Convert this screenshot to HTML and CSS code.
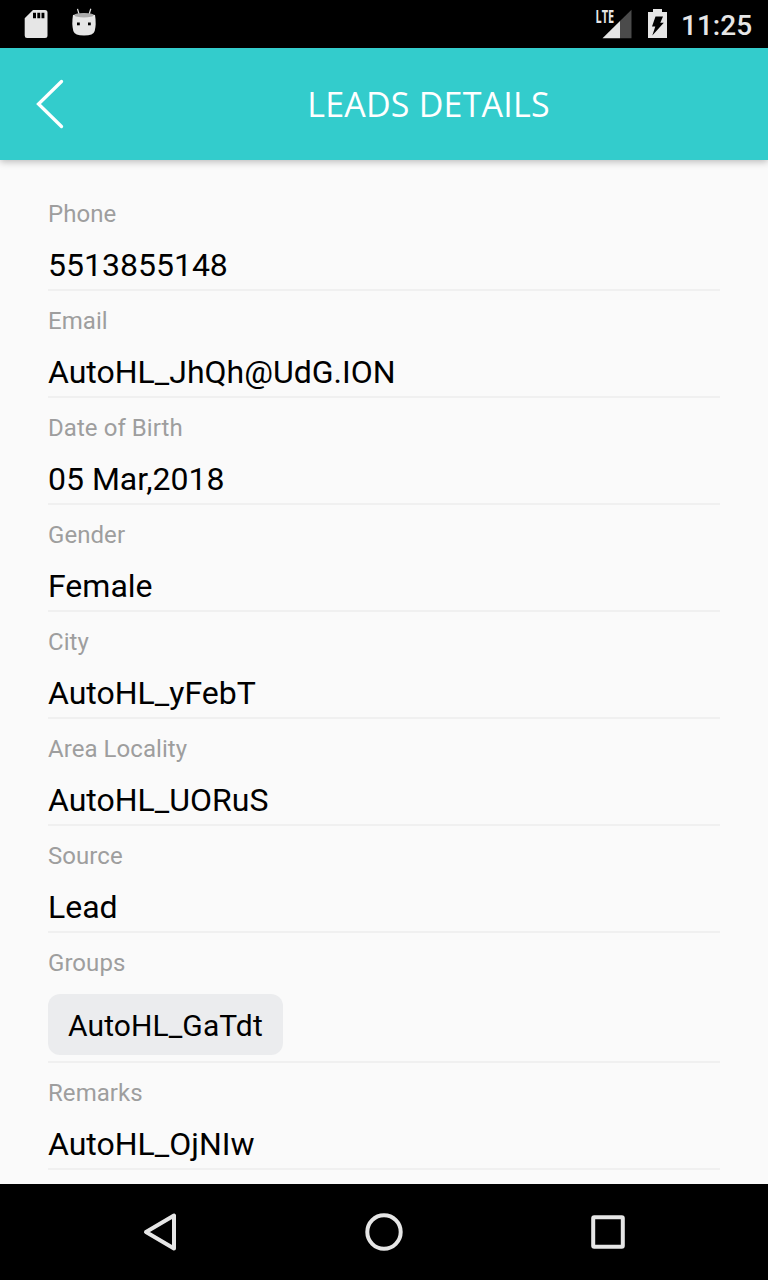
FILE: index.html
```html
<!DOCTYPE html>
<html lang="en">
<head>
<meta charset="utf-8">
<title>Leads Details</title>
<link rel="stylesheet" href="styles.css">
</head>
<body>
<div class="screen">
  <div class="status-bar">
    <svg class="status-left" width="120" height="48" viewBox="0 0 120 48">
      <path fill="#e6e6e6" fill-rule="evenodd" d="M33 10H45Q47.500 10 47.500 12.500V35.500Q47.500 38 45 38H27Q24.700 38 24.700 35.500V18.300ZM33 12.800V18.200H36V12.800ZM37.300 12.800V18.200H40.200V12.800ZM41.500 12.800V18.200H44.400V12.800Z"/>
      <path d="M77.500 8.800L79 14M90.800 8.800L89.200 14" stroke="#e6e6e6" stroke-width="1.200"/>
      <path fill="#e6e6e6" d="M73 15Q84 12 95 15Q96.500 24 94.700 31Q93.500 35.500 84 35.500Q74.700 35.500 73.300 31Q71.500 24 73 15Z"/>
      <ellipse cx="84" cy="15.200" rx="9.600" ry="2.300" fill="#aaa"/>
      <rect x="77" y="22.500" width="2.800" height="2.800" fill="#000"/>
      <rect x="88" y="22.500" width="2.800" height="2.800" fill="#000"/>
    </svg>
    <svg class="status-right" width="90" height="48" viewBox="590 0 90 48">
      <text class="network" x="595.500" y="22.700" textLength="18.500" lengthAdjust="spacingAndGlyphs">LTE</text>
      <path fill="#4b4b4b" d="M620 21L631.500 9.700V38.300H620Z"/>
      <path fill="#e6e6e6" d="M602.500 38.300L620 21V38.300Z"/>
      <path fill="#e6e6e6" d="M653 9H662V12H667V38H648V12H653Z"/>
      <path fill="#000" d="M655.500 16.500H663L660.300 22.800H663.800L652.300 35.500L655.300 26.500H652Z"/>
    </svg>
    <span class="clock">11:25</span>
  </div>
  <header class="app-bar">
    <svg class="back" width="32" height="56" viewBox="32 76 32 56"><path d="M61.500 81.500L38.500 104L61.500 126.500" fill="none" stroke="#fff" stroke-width="3.300" stroke-linecap="round"/></svg>
    <h1 class="title">LEADS DETAILS</h1>
  </header>
  <main class="details">
    <div class="field"><div class="label">Phone</div><div class="value">5513855148</div></div>
    <div class="field"><div class="label">Email</div><div class="value">AutoHL_JhQh@UdG.ION</div></div>
    <div class="field"><div class="label">Date of Birth</div><div class="value">05 Mar,2018</div></div>
    <div class="field"><div class="label">Gender</div><div class="value">Female</div></div>
    <div class="field"><div class="label">City</div><div class="value">AutoHL_yFebT</div></div>
    <div class="field"><div class="label">Area Locality</div><div class="value">AutoHL_UORuS</div></div>
    <div class="field"><div class="label">Source</div><div class="value">Lead</div></div>
    <div class="field field-groups"><div class="label">Groups</div><div class="chip">AutoHL_GaTdt</div></div>
    <div class="field"><div class="label">Remarks</div><div class="value">AutoHL_OjNIw</div></div>
  </main>
  <nav class="nav-bar">
    <svg width="48" height="48" viewBox="136 1208 48 48"><path d="M174 1215.500V1248.500L146 1232Z"/></svg>
    <svg width="48" height="48" viewBox="360 1208 48 48"><circle cx="384" cy="1232" r="16.700"/></svg>
    <svg width="48" height="48" viewBox="584 1208 48 48"><rect x="593.200" y="1217.200" width="29.600" height="29.600" rx="1"/></svg>
  </nav>
</div>
</body>
</html>
```
FILE: styles.css
```css
body {
  margin: 0;
}
.screen {
  display: flex;
  flex-direction: column;
  width: 768px;
  height: 1280px;
  overflow: hidden;
  background: #fafafa;
  font-family: Roboto, sans-serif;
  color: #000;
}
.status-bar {
  display: flex;
  flex: none;
  height: 48px;
  background: #000;
}
.status-right {
  margin-left: auto;
}
.network {
  font: bold 17px "Open Sans", sans-serif;
  fill: #e6e6e6;
}
.clock {
  width: 88px;
  padding: 1px 0 0 1px;
  box-sizing: border-box;
  font-size: 28px;
  font-weight: 500;
  line-height: 50px;
  color: #e6e6e6;
}
.app-bar {
  display: flex;
  flex: none;
  align-items: center;
  height: 112px;
  padding-left: 32px;
  background: #33cccc;
  box-shadow: 0 2px 7px rgba(0, 0, 0, 0.25);
}
.title {
  flex: 1;
  margin: 0;
  padding: 0 0 0 25px;
  text-align: center;
  font: 400 34px/48px "Open Sans", sans-serif;
  letter-spacing: 0.2px;
  color: #fff;
}
.details {
  flex: 1;
  padding: 24px 48px 0;
}
.field {
  display: flex;
  flex-direction: column;
  align-items: flex-start;
  gap: 18px;
  padding: 16px 0 5px;
  border-bottom: 2px solid #f0f0f0;
}
.label {
  font-size: 24px;
  line-height: 28px;
  letter-spacing: 0.06px;
  color: #9e9e9e;
}
.value {
  font-size: 32px;
  line-height: 38px;
}
.field-groups {
  gap: 17px;
  padding-bottom: 6px;
}
.chip {
  height: 61px;
  padding: 0 20px;
  border-radius: 12px;
  background: #ebecee;
  font-size: 30px;
  line-height: 64px;
  letter-spacing: 0.1px;
}
.nav-bar {
  display: flex;
  flex: none;
  justify-content: space-between;
  align-items: center;
  height: 96px;
  padding: 0 136px;
  box-sizing: border-box;
  background: #000;
}
.nav-bar svg {
  fill: none;
  stroke: #e6e6e6;
  stroke-width: 4;
  stroke-linejoin: round;
}
```
